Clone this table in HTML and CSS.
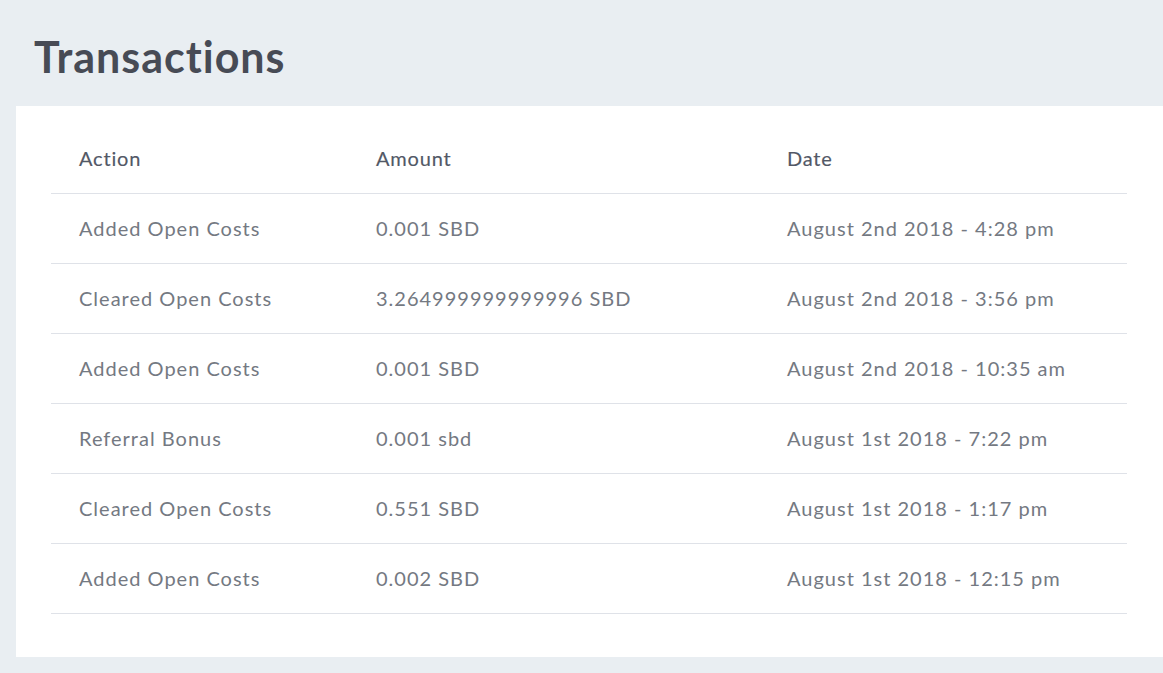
FILE: index.html
```html
<!DOCTYPE html>
<html lang="en">
<head>
<meta charset="utf-8">
<title>Transactions</title>
<link rel="stylesheet" href="styles.css">
</head>
<body>
<div class="page">
  <h1 class="title">Transactions</h1>
  <div class="card">
    <table class="tx">
      <thead>
        <tr><th class="c1">Action</th><th class="c2">Amount</th><th class="c3">Date</th></tr>
      </thead>
      <tbody>
        <tr><td>Added Open Costs</td><td>0.001 SBD</td><td>August 2nd 2018 - 4:28 pm</td></tr>
        <tr><td>Cleared Open Costs</td><td>3.264999999999996 SBD</td><td>August 2nd 2018 - 3:56 pm</td></tr>
        <tr><td>Added Open Costs</td><td>0.001 SBD</td><td>August 2nd 2018 - 10:35 am</td></tr>
        <tr><td>Referral Bonus</td><td>0.001 sbd</td><td>August 1st 2018 - 7:22 pm</td></tr>
        <tr><td>Cleared Open Costs</td><td>0.551 SBD</td><td>August 1st 2018 - 1:17 pm</td></tr>
        <tr><td>Added Open Costs</td><td>0.002 SBD</td><td>August 1st 2018 - 12:15 pm</td></tr>
      </tbody>
    </table>
  </div>
</div>
</body>
</html>
```
FILE: styles.css
```css
html, body {
  margin: 0;
  padding: 0;
  background: #e9eef2;
  font-family: Lato, "Open Sans", sans-serif;
}
.page {
  padding: 0 0 16px 16px;
}
.title {
  margin: 0;
  padding: 32px 0 24px 18px;
  font-size: 43px;
  line-height: 50px;
  font-weight: 700;
  letter-spacing: 1px;
  color: #474b55;
}
.card {
  background: #fff;
  padding: 18px 36px 43px 35px;
}
.tx {
  width: 100%;
  border-collapse: collapse;
  table-layout: fixed;
}
.tx th, .tx td {
  text-align: left;
  padding: 0 0 2px 28px;
  height: 67px;
  border-bottom: 1px solid #dfe2e8;
  font-size: 20px;
  letter-spacing: 0.8px;
}
.tx th {
  font-weight: 400;
  color: #525866;
  -webkit-text-stroke: 0.15px #525866;
}
.tx td {
  color: #747982;
  letter-spacing: 1px;
}
.c1 { width: 269px; }
.c2 { width: 383px; }
```
